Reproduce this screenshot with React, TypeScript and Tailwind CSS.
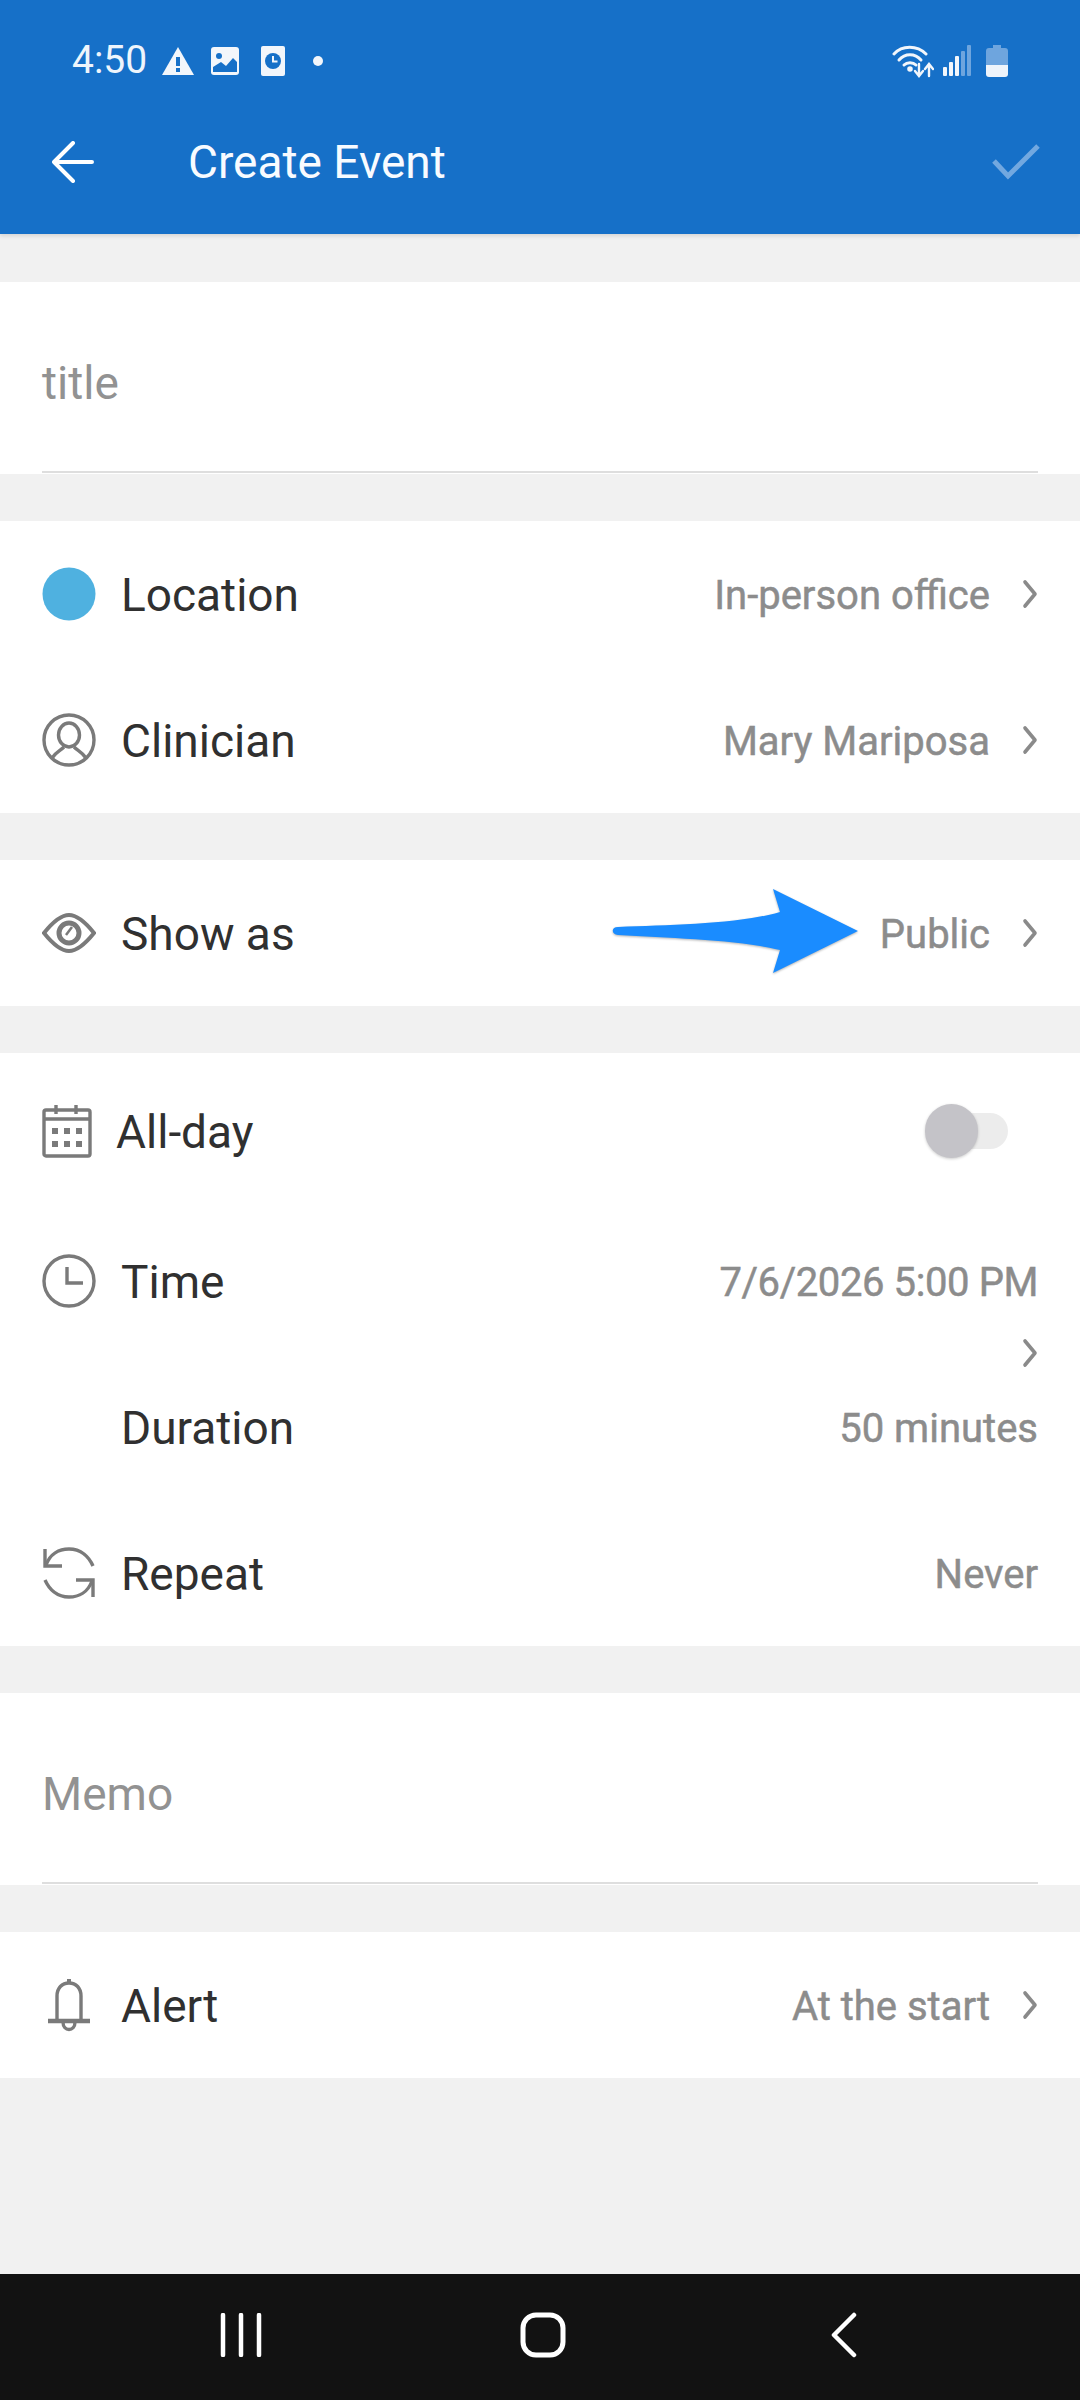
import React from "react";

const Chevron = ({ className = "" }: { className?: string }) => (
  <svg width="16" height="30" viewBox="0 0 16 30" className={className} fill="none" stroke="#8a8a8a" strokeWidth="3.6" strokeLinecap="round" strokeLinejoin="round">
    <path d="M3 3 L13 15 L3 27" />
  </svg>
);

const Label = ({ children }: { children: React.ReactNode }) => (
  <span className="text-[46px] leading-none text-[#303030] pt-[2px]">{children}</span>
);
const Value = ({ children, className = "" }: { children: React.ReactNode; className?: string }) => (
  <span className={`text-[40px] leading-none text-[#8c8c8c] [-webkit-text-stroke:0.5px_#8c8c8c] pt-[4px] ${className}`}>{children}</span>
);

const Icon = ({ children, w = 54, h = 54 }: { children: React.ReactNode; w?: number; h?: number }) => (
  <svg width={w} height={h} viewBox={`0 0 ${w} ${h}`} fill="none" stroke="#7a7a7a" strokeWidth="3.4" className="shrink-0">
    {children}
  </svg>
);

const Row = ({ icon, label, value, chevron, valueClass }: { icon?: React.ReactNode; label: string; value?: string; chevron?: boolean; valueClass?: string }) => (
  <div className="h-[146px] flex items-center justify-between pl-[42px] pr-[42px]">
    <div className="flex items-center gap-[25px]">
      {icon ?? <div className="w-[54px] h-[54px]" />}
      <Label>{label}</Label>
    </div>
    {value && (
      <div className="flex items-center gap-[32px]">
        <Value className={valueClass}>{value}</Value>
        {chevron && <Chevron />}
      </div>
    )}
  </div>
);

const Gap = ({ className = "h-[47px]" }: { className?: string }) => <div className={`bg-[#f1f1f1] ${className}`} />;

const InputBlock = ({ placeholder }: { placeholder: string }) => (
  <div className="bg-white h-[192px] px-[42px] flex flex-col">
    <div className="flex-1 flex items-center text-[46px] text-[#929292] leading-none pt-[12px]">{placeholder}</div>
    <div className="h-[2px] bg-[#dedede] mb-[1px]" />
  </div>
);

export default function App() {
  return (
    <div className="w-[1080px] h-[2400px] bg-[#f1f1f1] flex flex-col overflow-hidden" style={{ fontFamily: "Roboto, sans-serif" }}>
      <div className="h-[234px] bg-[#1670c8] shrink-0 flex flex-col text-white shadow-[0_2px_4px_rgba(0,0,0,0.12)] relative z-10">
        <div className="h-[120px] flex items-center justify-between pl-[72px] pr-[72px] pt-[1px]">
          <div className="flex items-center">
            <span className="text-[39px] leading-none text-[#eef5fc]">4:50</span>
            <svg width="34" height="30" viewBox="0 0 34 30" className="ml-[14px]">
              <path d="M17 1 L33 29 L1 29 Z" fill="#f2f6fb" />
              <rect x="15" y="11" width="4" height="9" fill="#1670c8" />
              <rect x="15" y="22" width="4" height="4" fill="#1670c8" />
            </svg>
            <svg width="30" height="30" viewBox="0 0 30 30" className="ml-[15px]">
              <rect x="1" y="1" width="28" height="28" rx="3" fill="#f2f6fb" />
              <circle cx="9" cy="10" r="3" fill="#1670c8" />
              <path d="M3 26 V21 L11 16 L16 20 L23 12 L27 16 V26 Z" fill="#1670c8" />
            </svg>
            <svg width="26" height="32" viewBox="0 0 26 32" className="ml-[20px]">
              <rect x="1" y="1" width="24" height="30" rx="2" fill="#f2f6fb" />
              <circle cx="13" cy="16" r="8" fill="#1670c8" />
              <path d="M13 11 V16.5 H17.5" stroke="#f2f6fb" strokeWidth="2" fill="none" />
            </svg>
            <div className="w-[10px] h-[10px] rounded-full bg-[#f2f6fb] ml-[27px]" />
          </div>
          <div className="flex items-center">
            <svg width="42" height="34" viewBox="0 0 42 34" fill="none" stroke="#f2f6fb" strokeWidth="3" strokeLinecap="round">
              <path d="M2 10 C10 1 25 1 34 10" />
              <path d="M7 16 C13 9 23 9 29 16" />
              <path d="M12 21 C15 18 21 18 24 21" />
              <circle cx="18" cy="25" r="1.3" fill="#f2f6fb" />
              <path d="M27 20 V31 M23 27 L27 32 L31 27" strokeWidth="2.4" />
              <path d="M37 32 V21 M33 25 L37 20 L41 25" strokeWidth="2.4" />
            </svg>
            <svg width="28" height="32" viewBox="0 0 28 32" className="ml-[9px]">
              <rect x="0" y="22" width="4" height="9" rx="1" fill="#f2f6fb" />
              <rect x="6" y="17" width="4" height="14" rx="1" fill="#f2f6fb" />
              <rect x="12" y="11" width="4" height="20" rx="1" fill="#f2f6fb" />
              <rect x="18" y="6" width="4" height="25" rx="1" fill="#6ea5de" />
              <rect x="24" y="0" width="4" height="31" rx="1" fill="#6ea5de" />
            </svg>
            <svg width="22" height="32" viewBox="0 0 22 32" className="ml-[15px]">
              <path d="M7 0 H15 V3 H19 Q22 3 22 6 V20 H0 V6 Q0 3 3 3 H7 Z" fill="#6ea5de" />
              <path d="M0 20 H22 V29 Q22 32 19 32 H3 Q0 32 0 29 Z" fill="#eef4fb" />
            </svg>
          </div>
        </div>
        <div className="flex-1 flex items-center pl-[52px] pr-[40px] pb-[30px]">
          <svg width="42" height="42" viewBox="0 0 42 42" fill="none" stroke="#fff" strokeWidth="4" strokeLinecap="round" strokeLinejoin="round">
            <path d="M2 21 H40 M21 2 L2 21 L21 40" />
          </svg>
          <span className="ml-[94px] text-[46px] leading-none text-[#f8fbff]">Create Event</span>
          <svg width="48" height="38" viewBox="0 0 48 38" fill="none" stroke="#72a8e0" strokeWidth="5" className="ml-auto">
            <path d="M2 18 L16 33 L46 3" />
          </svg>
        </div>
      </div>

      <Gap className="h-[48px]" />
      <InputBlock placeholder="title" />
      <Gap />

      <div className="bg-white">
        <Row
          label="Location"
          value="In-person office"
          chevron
          icon={
            <svg width="54" height="54" viewBox="0 0 54 54" className="shrink-0">
              <circle cx="27" cy="27" r="26.5" fill="#4fb1e0" />
            </svg>
          }
        />
        <Row
          label="Clinician"
          value="Mary Mariposa"
          chevron
          icon={
            <Icon>
              <circle cx="27" cy="27" r="25" />
              <ellipse cx="27" cy="22" rx="10.5" ry="12" />
              <path d="M10 45 C14 39 18 38 22 34 M44 45 C40 39 36 38 32 34" />
            </Icon>
          }
        />
      </div>
      <Gap />

      <div className="bg-white relative">
        <Row
          label="Show as"
          value="Public"
          chevron
          icon={
            <Icon>
              <path d="M2 27 C14 12 22 9 27 9 C32 9 40 12 52 27 C40 42 32 45 27 45 C22 45 14 42 2 27 Z" strokeWidth="4" />
              <circle cx="27" cy="27" r="10" strokeWidth="5" />
              <path d="M24 29 L30 21" strokeWidth="2.5" />
            </Icon>
          }
        />
        <svg width="250" height="90" viewBox="0 0 250 90" className="absolute left-[610px] top-[28px]" style={{ filter: "drop-shadow(0 1px 1px rgba(0,0,0,0.3))" }}>
          <path d="M163 1 L248 43 L163 85 L170 62 C130 52 60 50 8 47 C1 46 1 39 8 39 C60 37 130 36 170 24 Z" fill="#1a8cff" />
        </svg>
      </div>
      <Gap />

      <div className="bg-white relative">
        <div className="h-[155px] flex items-center justify-between pl-[42px] pr-[42px]">
          <div className="flex items-center gap-[24px]">
            <Icon w={50} h={54}>
              <rect x="2" y="6" width="46" height="46" rx="2" />
              <path d="M2 15 H48 M14 1 V10 M34 1 V10" />
              <g fill="#7a7a7a" stroke="none">
                <rect x="10" y="24" width="6" height="6" />
                <rect x="22" y="24" width="6" height="6" />
                <rect x="34" y="24" width="6" height="6" />
                <rect x="10" y="37" width="6" height="6" />
                <rect x="22" y="37" width="6" height="6" />
                <rect x="34" y="37" width="6" height="6" />
              </g>
            </Icon>
            <Label>All-day</Label>
          </div>
          <div className="relative w-[83px] h-[54px] mr-[30px] flex items-center">
            <div className="absolute right-0 w-[58px] h-[36px] rounded-full bg-[#ececec]" />
            <div className="absolute left-0 w-[53px] h-[54px] rounded-full bg-[#c4c3c8] shadow-[0_1px_3px_rgba(0,0,0,0.2)]" />
          </div>
        </div>
        <Row
          label="Time"
          value="7/6/2026 5:00 PM"
          valueClass="tracking-[-0.4px]"
          icon={
            <Icon>
              <circle cx="27" cy="27" r="25" />
              <path d="M25 13 V29 H41" />
            </Icon>
          }
        />
        <Row label="Duration" value="50 minutes" />
        <Row
          label="Repeat"
          value="Never"
          icon={
            <Icon>
              <path d="M3 3 V20 H20" />
              <path d="M4 19 C8 8 17 3 27 3 C39 3 47 11 51 20" />
              <path d="M51 51 V34 H34" />
              <path d="M50 35 C46 46 37 51 27 51 C15 51 7 43 3 34" />
            </Icon>
          }
        />
        <Chevron className="absolute right-[42px] top-[285px]" />
      </div>
      <Gap />
      <InputBlock placeholder="Memo" />
      <Gap />

      <div className="bg-white">
        <Row
          label="Alert"
          value="At the start"
          chevron
          icon={
            <Icon w={54} h={54}>
              <path d="M15 43 V18 C15 10 20 5 27 5 C34 5 39 10 39 18 V43" />
              <path d="M6 43 H48" strokeWidth="4.5" />
              <path d="M21 44 C21 54 33 54 33 44" />
              <path d="M27 1 V5" strokeWidth="4" />
            </Icon>
          }
        />
      </div>

      <div className="flex-1" />

      <div className="h-[126px] shrink-0 bg-[#121212] flex items-center justify-between pl-[220px] pr-[222px] pb-[4px]">
        <svg width="42" height="44" viewBox="0 0 42 44" fill="none" stroke="#fff" strokeWidth="4.5" strokeLinecap="round">
          <path d="M3 2 V42 M21 2 V42 M39 2 V42" />
        </svg>
        <svg width="46" height="46" viewBox="0 0 46 46" fill="none" stroke="#fff" strokeWidth="5" className="mr-[6px]">
          <rect x="3" y="3" width="40" height="40" rx="13" />
        </svg>
        <svg width="28" height="46" viewBox="0 0 28 46" fill="none" stroke="#fff" strokeWidth="4.5" strokeLinecap="round" strokeLinejoin="round">
          <path d="M24 3 L4 23 L24 43" />
        </svg>
      </div>
    </div>
  );
}
